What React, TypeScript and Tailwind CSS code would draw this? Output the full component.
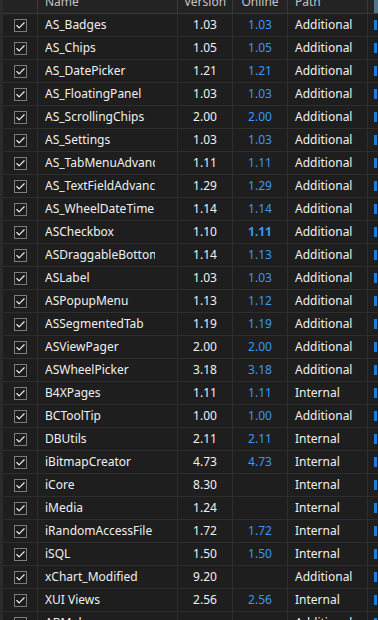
import { Check } from 'lucide-react';

interface Lib {
    name: string;
    version: string;
    online: string;
    path: 'Additional' | 'Internal';
    checked: boolean;
    newer?: boolean;
}

const libs: Lib[] = [
    { name: 'AS_Badges', version: '1.03', online: '1.03', path: 'Additional', checked: true },
    { name: 'AS_Chips', version: '1.05', online: '1.05', path: 'Additional', checked: true },
    { name: 'AS_DatePicker', version: '1.21', online: '1.21', path: 'Additional', checked: true },
    { name: 'AS_FloatingPanel', version: '1.03', online: '1.03', path: 'Additional', checked: true },
    { name: 'AS_ScrollingChips', version: '2.00', online: '2.00', path: 'Additional', checked: true },
    { name: 'AS_Settings', version: '1.03', online: '1.03', path: 'Additional', checked: true },
    { name: 'AS_TabMenuAdvanced', version: '1.11', online: '1.11', path: 'Additional', checked: true },
    { name: 'AS_TextFieldAdvanced', version: '1.29', online: '1.29', path: 'Additional', checked: true },
    { name: 'AS_WheelDateTimePicker', version: '1.14', online: '1.14', path: 'Additional', checked: true },
    { name: 'ASCheckbox', version: '1.10', online: '1.11', path: 'Additional', checked: true, newer: true },
    { name: 'ASDraggableBottomCard', version: '1.14', online: '1.13', path: 'Additional', checked: true },
    { name: 'ASLabel', version: '1.03', online: '1.03', path: 'Additional', checked: true },
    { name: 'ASPopupMenu', version: '1.13', online: '1.12', path: 'Additional', checked: true },
    { name: 'ASSegmentedTab', version: '1.19', online: '1.19', path: 'Additional', checked: true },
    { name: 'ASViewPager', version: '2.00', online: '2.00', path: 'Additional', checked: true },
    { name: 'ASWheelPicker', version: '3.18', online: '3.18', path: 'Additional', checked: true },
    { name: 'B4XPages', version: '1.11', online: '1.11', path: 'Internal', checked: true },
    { name: 'BCToolTip', version: '1.00', online: '1.00', path: 'Additional', checked: true },
    { name: 'DBUtils', version: '2.11', online: '2.11', path: 'Internal', checked: true },
    { name: 'iBitmapCreator', version: '4.73', online: '4.73', path: 'Internal', checked: true },
    { name: 'iCore', version: '8.30', online: '', path: 'Internal', checked: true },
    { name: 'iMedia', version: '1.24', online: '', path: 'Internal', checked: true },
    { name: 'iRandomAccessFile', version: '1.72', online: '1.72', path: 'Internal', checked: true },
    { name: 'iSQL', version: '1.50', online: '1.50', path: 'Internal', checked: true },
    { name: 'xChart_Modified', version: '9.20', online: '', path: 'Additional', checked: true },
    { name: 'XUI Views', version: '2.56', online: '2.56', path: 'Internal', checked: true },
    { name: 'ABMob', version: '', online: '', path: 'Additional', checked: false },
];

const cols = 'grid grid-cols-[35px_140px_55px_55px_80px_10px]';

function Box({ checked }: { checked: boolean }) {
    return (
        <div className="w-[13px] h-[13px] border border-[#7c7c7c] bg-[#1c1c1c] flex items-center justify-center">
            {checked && <Check size={11} strokeWidth={2.5} className="text-[#f2f2f2]" />}
        </div>
    );
}

export default function App() {
    return (
        <div
            className="w-[378px] h-[620px] overflow-hidden bg-[#1e1e1e] flex text-[12px] text-[#f0f0f0]"
            style={{ fontFamily: '"Noto Sans", "Open Sans", sans-serif' }}
        >
            {/* row header strip */}
            <div className="w-[3px] shrink-0 bg-[#2b2b2b]" />

            <div className="flex-1 -mt-[10px]">
                {/* header */}
                <div className={`${cols} h-[24px] bg-[#232323] border-b border-[#3a3a3a] text-[#c4c4c4]`}>
                    <div className="border-r border-[#3a3a3a]" />
                    <div className="border-r border-[#3a3a3a] pl-[7px] flex items-center">Name</div>
                    <div className="border-r border-[#3a3a3a] flex items-center justify-center">Version</div>
                    <div className="border-r border-[#3a3a3a] flex items-center justify-center">Online</div>
                    <div className="border-r border-[#3a3a3a] pl-[7px] flex items-center">Path</div>
                    <div className="pl-[6px]">
                        <div className="w-[4px] h-full bg-[#4f7489]" />
                    </div>
                </div>

                {libs.map((lib) => (
                    <div key={lib.name} className={`${cols} h-[23px] border-b border-[#2e2e2e]`}>
                        <div className="border-r border-[#2e2e2e] flex items-center justify-center">
                            <Box checked={lib.checked} />
                        </div>
                        <div className="border-r border-[#2e2e2e] pl-[7px] flex items-center">
                            <div className="w-[110px] overflow-hidden whitespace-nowrap">{lib.name}</div>
                        </div>
                        <div className="border-r border-[#2e2e2e] flex items-center justify-center">{lib.version}</div>
                        <div
                            className={`border-r border-[#2e2e2e] flex items-center justify-center text-[#3a98ef] ${lib.newer ? 'font-bold' : ''}`}
                        >
                            {lib.online}
                        </div>
                        <div className="border-r border-[#2e2e2e] pl-[7px] flex items-center">{lib.path}</div>
                        <div className="pl-[6px] flex items-center">
                            <div className="w-[3px] h-[10px] bg-[#1e7bd8]" />
                        </div>
                    </div>
                ))}
            </div>
        </div>
    );
}
